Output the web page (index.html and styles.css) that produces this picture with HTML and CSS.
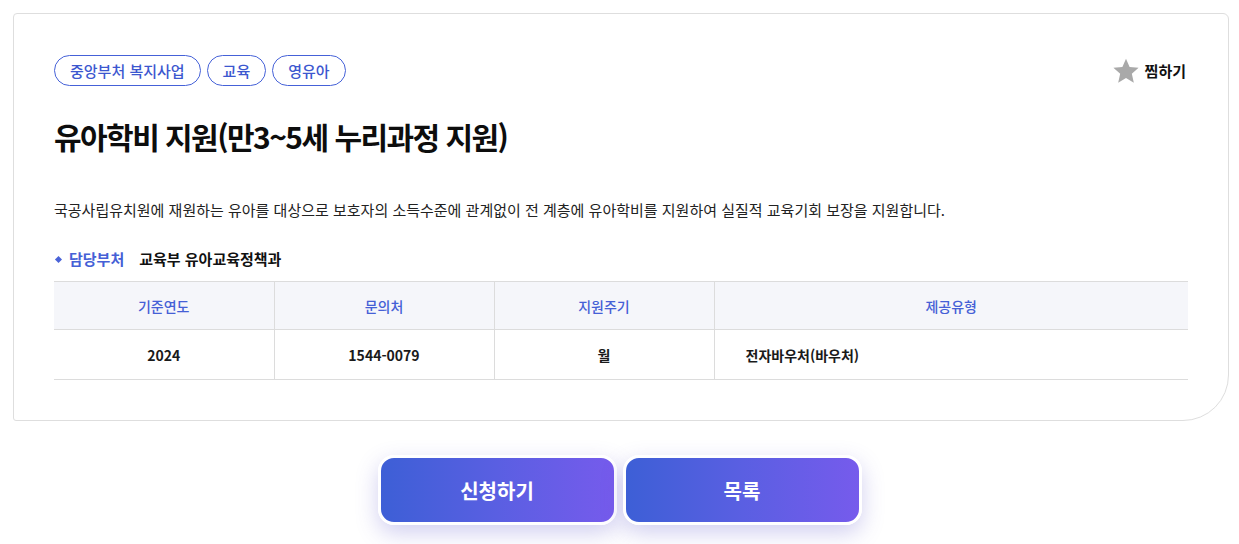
FILE: index.html
```html
<!DOCTYPE html>
<html lang="ko">
<head>
<meta charset="utf-8">
<link rel="stylesheet" href="styles.css">
</head>
<body>
<div class="page">
  <section class="card">
    <div class="top-row">
      <div class="tags">
        <span class="tag">중앙부처 복지사업</span>
        <span class="tag">교육</span>
        <span class="tag">영유아</span>
      </div>
      <button class="bookmark" type="button">
        <svg class="star" width="28" height="28" viewBox="0 0 24 24"><path d="M12 1.4l3.1 7.2 7.7.7-5.8 5.1 1.7 7.6L12 18.1 5.3 22l1.7-7.6L1.2 9.3l7.7-.7z" fill="#a9a9a9"/></svg>
        <span>찜하기</span>
      </button>
    </div>
    <h1 class="title">유아학비 지원(만3~5세 누리과정 지원)</h1>
    <p class="desc">국공사립유치원에 재원하는 유아를 대상으로 보호자의 소득수준에 관계없이 전 계층에 유아학비를 지원하여 실질적 교육기회 보장을 지원합니다.</p>
    <div class="dept">
      <span class="dept-label">담당부처</span>
      <span class="dept-value">교육부 유아교육정책과</span>
    </div>
    <table class="info">
      <thead>
        <tr><th class="c1">기준연도</th><th class="c2">문의처</th><th class="c3">지원주기</th><th class="c4">제공유형</th></tr>
      </thead>
      <tbody>
        <tr><td>2024</td><td>1544-0079</td><td>월</td><td class="left">전자바우처(바우처)</td></tr>
      </tbody>
    </table>
  </section>
  <div class="actions">
    <button class="btn" type="button">신청하기</button>
    <button class="btn" type="button">목록</button>
  </div>
</div>
</body>
</html>
```
FILE: styles.css
```css
* { box-sizing: border-box; }
html, body { margin: 0; padding: 0; background: #fff; }
body {
  font-family: "Noto Sans CJK KR", "Noto Sans", sans-serif;
  color: #111;
}
.page { padding: 13px 10px 40px 13px; }
.card {
  width: 1216px;
  border: 1px solid #dedede;
  border-radius: 4px 6px 46px 3px;
  padding: 41px 40px 40px 40px;
}
.top-row {
  display: flex;
  justify-content: space-between;
  align-items: center;
}
.tags { display: flex; gap: 6px; }
.tag {
  display: inline-flex;
  align-items: center;
  height: 31px;
  padding: 0 15px;
  border: 1px solid #4561d8;
  border-radius: 16px;
  color: #3c57cf;
  font-size: 15px;
  font-weight: 500;
}
.bookmark {
  display: flex;
  align-items: center;
  gap: 5px;
  background: none;
  border: 0;
  padding: 0;
  margin-right: 2px;
  font-family: inherit;
  font-size: 15px;
  font-weight: 700;
  color: #111;
  cursor: pointer;
}
.title {
  margin: 30px 0 0;
  font-size: 30px;
  line-height: 40px;
  font-weight: 700;
  letter-spacing: -1.55px;
  color: #0d0d0d;
}
.desc {
  margin: 42px 0 0;
  font-size: 15px;
  line-height: 24px;
  color: #222;
}
.dept {
  margin-top: 25px;
  display: flex;
  align-items: center;
  font-size: 15px;
  line-height: 24px;
  font-weight: 700;
}
.dept-label {
  position: relative;
  padding-left: 15px;
  color: #4560d6;
  margin-right: 15px;
}
.dept-label::before {
  content: "";
  position: absolute;
  left: 2px;
  top: 10px;
  width: 5px;
  height: 5px;
  background: #4a63d8;
  transform: rotate(45deg);
}
.dept-value { color: #111; }
.info {
  margin-top: 10px;
  width: 100%;
  border-collapse: collapse;
  font-size: 14px;
}
.info th, .info td {
  border-top: 1px solid #dcdcdc;
  border-bottom: 1px solid #dcdcdc;
  border-left: 1px solid #dcdcdc;
  text-align: center;
}
.info th:first-child, .info td:first-child { border-left: 0; }
.info th {
  height: 48px;
  background: #f5f6fa;
  color: #4560d6;
  font-weight: 500;
}
.info td {
  height: 50px;
  font-weight: 600;
  color: #1a1a1a;
}
.info td.left { text-align: left; padding-left: 31px; }
.c1, .c2, .c3 { width: 220px; }
.actions {
  display: flex;
  justify-content: center;
  gap: 6px;
  margin-top: 34px;
  margin-left: -13px;
  margin-right: -10px;
}
.btn {
  width: 239px;
  height: 70px;
  border: 3px solid #fff;
  border-radius: 16px;
  background: linear-gradient(90deg, #3d5fd6 0%, #5a5fe2 50%, #765bec 100%);
  color: #fff;
  font-family: inherit;
  font-size: 20px;
  font-weight: 700;
  box-shadow: 0 8px 22px rgba(88, 84, 200, 0.28);
  cursor: pointer;
}
```
